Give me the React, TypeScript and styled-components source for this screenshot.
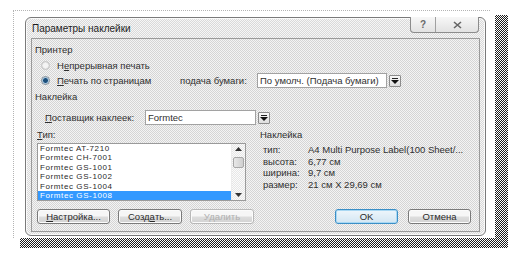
import { Fragment } from "react";
import styled, { createGlobalStyle } from "styled-components";

const GlobalStyle = createGlobalStyle`
  html, body {
    margin: 0;
    padding: 0;
    background: #ffffff;
  }
  body {
    width: 526px;
    height: 263px;
    overflow: hidden;
    font-family: "Liberation Sans", Arial, sans-serif;
    font-size: 9.5px;
    color: #303030;
  }
`;

// scanned look: 1px checker pattern
const dither = (a: string, b: string) =>
  `repeating-conic-gradient(${a} 0 25%, ${b} 0 50%) 0 0 / 2px 2px`;

const Page = styled.div`
  padding: 10px 0 0 13px;
`;

const Frame = styled.div`
  box-sizing: border-box;
  width: 477px;
  height: 228px;
  border-top: 1px dotted #b4b4b4;
  border-left: 1px dotted #b4b4b4;
  padding: 6px 0 0 11px;
`;

const Dialog = styled.div`
  position: relative;
  box-sizing: border-box;
  width: 461px;
  height: 219px;
  border: 1px solid #7a7a7a;
  border-radius: 6px;
  background: ${dither("#d9d9d9", "#f6f6f6")};
  box-shadow: inset 0 0 0 1px #fafafa;
  padding: 0 5px 3px 5px;
  display: flex;
  flex-direction: column;

  &::before {
    content: "";
    position: absolute;
    left: 469px;
    top: -3px;
    width: 13px;
    height: 233px;
    background: ${dither("#1e1e1e", "#ffffff")};
  }

  &::after {
    content: "";
    position: absolute;
    left: -6px;
    top: 220px;
    width: 488px;
    height: 10px;
    background: ${dither("#1e1e1e", "#ffffff")};
  }
`;

const TitleBar = styled.div`
  height: 20px;
  display: flex;
  justify-content: space-between;
  align-items: flex-start;
`;

const Title = styled.div`
  padding: 5px 0 0 1px;
  font-size: 10px;
  line-height: 12px;
  color: #1e1e1e;
`;

const CaptionGroup = styled.div`
  display: flex;
  height: 15px;
  margin: -1px 1px 0 0;
  border: 1px solid #8c8c8c;
  border-top: none;
  border-radius: 0 0 4px 4px;
  background: linear-gradient(#f7f7f7, #e2e2e2);
  overflow: hidden;
`;

const CaptionBtn = styled.div<{ $w: number; $divider?: boolean }>`
  width: ${(p) => p.$w}px;
  display: flex;
  align-items: center;
  justify-content: center;
  border-left: ${(p) => (p.$divider ? "1px solid #a0a0a0" : "none")};
  font-size: 10px;
  font-weight: bold;
  color: #6a6a6a;
`;

const Panel = styled.div`
  flex: 1;
  border: 1px solid #9a9a9a;
  background: ${dither("#d5d5d5", "#f4f4f4")};
  display: flex;
  flex-direction: column;
`;

const GroupLabel = styled.div<{ $top: number }>`
  margin: ${(p) => p.$top}px 0 0 3px;
  line-height: 12px;
  height: 12px;
`;

const Row = styled.div<{ $top: number; $left: number }>`
  display: flex;
  align-items: center;
  height: 15px;
  margin: ${(p) => p.$top}px 0 0 ${(p) => p.$left}px;
`;

const RadioLabel = styled.label`
  display: flex;
  align-items: center;
  gap: 7px;
  width: 139px;
`;

const Radio = styled.span<{ $checked?: boolean }>`
  box-sizing: border-box;
  width: 9px;
  height: 9px;
  border-radius: 50%;
  border: 1px solid ${(p) => (p.$checked ? "#7e8c99" : "#c4c4c4")};
  background: ${(p) =>
    p.$checked
      ? "radial-gradient(circle, #1d4f7a 0 2px, #6fa0c8 2.5px, #e6eef5 3.5px)"
      : "radial-gradient(circle, #f4f4f4 0 2px, #dcdcdc 4px)"};
`;

const FieldLabel = styled.span<{ $w: number }>`
  width: ${(p) => p.$w}px;
`;

const Select = styled.div`
  display: flex;
  align-items: center;
  gap: 2px;
  height: 15px;
`;

const SelectField = styled.div<{ $w: number }>`
  box-sizing: border-box;
  width: ${(p) => p.$w}px;
  height: 15px;
  padding-left: 2px;
  border: 1px solid #a2a2a2;
  background: #ffffff;
  line-height: 13px;
  white-space: nowrap;
  overflow: hidden;
`;

const DropBtn = styled.div`
  box-sizing: border-box;
  width: 12px;
  height: 12px;
  border: 1px solid #8c8c8c;
  border-radius: 1px;
  background: linear-gradient(#f8f8f8, #dedede);
  display: flex;
  align-items: center;
  justify-content: center;
`;

const Lower = styled.div`
  flex: 1;
  margin: 4px 8px 7px 5px;
  display: grid;
  grid-template-columns: 219px 1fr;
  column-gap: 4px;
`;

const Column = styled.div`
  display: flex;
  flex-direction: column;
`;

const ColLabel = styled.div`
  line-height: 12px;
  height: 12px;
`;

const ListBox = styled.div`
  box-sizing: border-box;
  width: 209px;
  height: 58px;
  margin-top: 2px;
  border: 1px solid #9a9a9a;
  background: #ffffff;
  display: flex;
`;

const Items = styled.div`
  flex: 1;
  display: flex;
  flex-direction: column;
`;

const Item = styled.div<{ $selected?: boolean }>`
  height: 9.4px;
  line-height: 9.4px;
  padding-left: 2px;
  font-size: 8px;
  letter-spacing: 0.6px;
  white-space: nowrap;
  color: ${(p) => (p.$selected ? "#ffffff" : "#2a2a2a")};
  background: ${(p) => (p.$selected ? "#3399ff" : "transparent")};
`;

const ScrollBar = styled.div`
  width: 13px;
  background: ${dither("#e6e6e6", "#fbfbfb")};
  border-left: 1px solid #ececec;
  display: flex;
  flex-direction: column;
  align-items: center;
`;

const ScrollArrow = styled.div`
  height: 10px;
  display: flex;
  align-items: center;
  justify-content: center;
`;

const ScrollTrack = styled.div`
  flex: 1;
`;

const Thumb = styled.div`
  box-sizing: border-box;
  width: 11px;
  height: 11px;
  margin-top: 3px;
  border: 1px solid #a8a8a8;
  border-radius: 2px;
  background: linear-gradient(90deg, #e8e8e8, #cfcfcf);
`;

const ButtonRow = styled.div<{ $gap: number; $left?: number }>`
  display: flex;
  gap: ${(p) => p.$gap}px;
  margin-top: auto;
  padding-left: ${(p) => p.$left ?? 0}px;
`;

const Button = styled.div<{ $w: number; $primary?: boolean; $disabled?: boolean }>`
  box-sizing: border-box;
  width: ${(p) => p.$w}px;
  height: 15px;
  border: 1px solid ${(p) => (p.$primary ? "#3b8fc7" : p.$disabled ? "#b8b8b8" : "#7a7a7a")};
  border-radius: 3px;
  background: ${(p) =>
    p.$primary
      ? "linear-gradient(#eef6fb, #d3e6f3)"
      : "linear-gradient(#f6f6f6 0 45%, #dddddd 55%, #d2d2d2)"};
  box-shadow: inset 0 0 0 1px ${(p) => (p.$primary ? "#a9d8f3" : "#fbfbfb")};
  display: flex;
  align-items: center;
  justify-content: center;
  color: ${(p) => (p.$disabled ? "#b0b0b0" : "#2a2a2a")};
`;

const InfoTable = styled.div`
  display: grid;
  grid-template-columns: 45px 1fr;
  margin: 3px 0 0 3px;
  grid-auto-rows: 11.7px;
  line-height: 11.7px;
`;

const InfoValue = styled.span`
  white-space: nowrap;
`;

const Arrow = ({ up }: { up?: boolean }) => (
  <svg width="7" height="4" viewBox="0 0 7 4">
    <polygon points={up ? "0,4 7,4 3.5,0" : "0,0 7,0 3.5,4"} fill="#333" />
  </svg>
);

const DropArrow = () => (
  <svg width="8" height="6" viewBox="0 0 8 6">
    <rect x="1" y="0" width="6" height="1" fill="#222" />
    <polygon points="0,2 8,2 4,6" fill="#111" />
  </svg>
);

const CloseGlyph = () => (
  <svg width="9" height="8" viewBox="0 0 9 8">
    <path d="M1 1 L8 7 M8 1 L1 7" stroke="#666" strokeWidth="1.6" />
  </svg>
);

const types = [
  "Formtec AT-7210",
  "Formtec CH-7001",
  "Formtec GS-1001",
  "Formtec GS-1002",
  "Formtec GS-1004",
  "Formtec GS-1008",
];

const info: [string, string][] = [
  ["тип:", "A4 Multi Purpose Label(100 Sheet/..."],
  ["высота:", "6,77 см"],
  ["ширина:", "9,7 см"],
  ["размер:", "21 см X 29,69 см"],
];

export default function App() {
  return (
    <>
      <GlobalStyle />
      <Page>
        <Frame>
          <Dialog>
            <TitleBar>
              <Title>Параметры наклейки</Title>
              <CaptionGroup>
                <CaptionBtn $w={24}>?</CaptionBtn>
                <CaptionBtn $w={42} $divider>
                  <CloseGlyph />
                </CaptionBtn>
              </CaptionGroup>
            </TitleBar>

            <Panel>
              <GroupLabel $top={5}>Принтер</GroupLabel>
              <Row $top={2} $left={9}>
                <RadioLabel>
                  <Radio />
                  <span>
                    Н<u>е</u>прерывная печать
                  </span>
                </RadioLabel>
              </Row>
              <Row $top={0} $left={9}>
                <RadioLabel>
                  <Radio $checked />
                  <span>
                    <u>П</u>ечать по страницам
                  </span>
                </RadioLabel>
                <FieldLabel $w={77}>подача бумаги:</FieldLabel>
                <Select>
                  <SelectField $w={130}>По умолч. (Подача бумаги)</SelectField>
                  <DropBtn>
                    <DropArrow />
                  </DropBtn>
                </Select>
              </Row>

              <GroupLabel $top={3}>Наклейка</GroupLabel>
              <Row $top={7} $left={13}>
                <FieldLabel $w={100}>
                  <u>П</u>оставщик наклеек:
                </FieldLabel>
                <Select>
                  <SelectField $w={111}>Formtec</SelectField>
                  <DropBtn>
                    <DropArrow />
                  </DropBtn>
                </Select>
              </Row>

              <Lower>
                <Column>
                  <ColLabel>
                    <u>Т</u>ип:
                  </ColLabel>
                  <ListBox>
                    <Items>
                      {types.map((t, i) => (
                        <Item key={t} $selected={i === types.length - 1}>
                          {t}
                        </Item>
                      ))}
                    </Items>
                    <ScrollBar>
                      <ScrollArrow>
                        <Arrow up />
                      </ScrollArrow>
                      <Thumb />
                      <ScrollTrack />
                      <ScrollArrow>
                        <Arrow />
                      </ScrollArrow>
                    </ScrollBar>
                  </ListBox>
                  <ButtonRow $gap={8}>
                    <Button $w={73}>
                      <u>Н</u>астройка...
                    </Button>
                    <Button $w={64}>
                      Созд<u>а</u>ть...
                    </Button>
                    <Button $w={64} $disabled>
                      Удалить
                    </Button>
                  </ButtonRow>
                </Column>

                <Column>
                  <ColLabel>Наклейка</ColLabel>
                  <InfoTable>
                    {info.map(([k, v]) => (
                      <Fragment key={k}>
                        <span>{k}</span>
                        <InfoValue>{v}</InfoValue>
                      </Fragment>
                    ))}
                  </InfoTable>
                  <ButtonRow $gap={10} $left={75}>
                    <Button $w={63} $primary>
                      OK
                    </Button>
                    <Button $w={63}>Отмена</Button>
                  </ButtonRow>
                </Column>
              </Lower>
            </Panel>
          </Dialog>
        </Frame>
      </Page>
    </>
  );
}
